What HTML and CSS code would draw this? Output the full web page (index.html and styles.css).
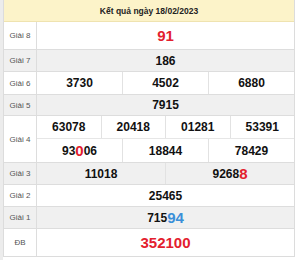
FILE: index.html
```html
<!DOCTYPE html>
<html lang="vi">
<head>
<meta charset="utf-8">
<title>Kết quả ngày 18/02/2023</title>
<link rel="stylesheet" href="styles.css">
</head>
<body>
<div class="wrap">
  <div class="board">
    <div class="head">Kết quả ngày 18/02/2023</div>
    <div class="row r8">
      <div class="label">Giải 8</div>
      <div class="cells"><div class="cell big red">91</div></div>
    </div>
    <div class="row alt r7">
      <div class="label">Giải 7</div>
      <div class="cells"><div class="cell">186</div></div>
    </div>
    <div class="row r6">
      <div class="label">Giải 6</div>
      <div class="cells"><div class="cell">3730</div><div class="cell">4502</div><div class="cell">6880</div></div>
    </div>
    <div class="row alt r5">
      <div class="label">Giải 5</div>
      <div class="cells"><div class="cell">7915</div></div>
    </div>
    <div class="row r4">
      <div class="label">Giải 4</div>
      <div class="stack">
        <div class="cells sub1"><div class="cell">63078</div><div class="cell">20418</div><div class="cell">01281</div><div class="cell">53391</div></div>
        <div class="cells sub2"><div class="cell">93<span class="big red">0</span>06</div><div class="cell">18844</div><div class="cell">78429</div></div>
      </div>
    </div>
    <div class="row alt r3">
      <div class="label">Giải 3</div>
      <div class="cells"><div class="cell">11018</div><div class="cell">9268<span class="big red">8</span></div></div>
    </div>
    <div class="row r2">
      <div class="label">Giải 2</div>
      <div class="cells"><div class="cell">25465</div></div>
    </div>
    <div class="row alt r1">
      <div class="label">Giải 1</div>
      <div class="cells"><div class="cell">715<span class="big blue">94</span></div></div>
    </div>
    <div class="row rdb">
      <div class="label">ĐB</div>
      <div class="cells"><div class="cell big red">352100</div></div>
    </div>
  </div>
</div>
</body>
</html>
```
FILE: styles.css
```css
html, body {
  margin: 0;
  padding: 0;
  background: #ffffff;
}
body {
  font-family: "Liberation Sans", Arial, sans-serif;
  width: 300px;
  height: 260px;
  overflow: hidden;
}
.wrap {
  border-left: 3px solid #ececec;
  width: 292px;
  height: 260px;
}
.board {
  width: 292px;
  box-sizing: border-box;
  border-left: 1px solid #dcdcdc;
  border-right: 1px solid #dcdcdc;
  border-bottom: 1px solid #dcdcdc;
}
.head {
  height: 22px;
  background: #fcf3c9;
  border-bottom: 1px solid #efe3b0;
  box-sizing: border-box;
  display: flex;
  align-items: center;
  justify-content: center;
  font-weight: bold;
  font-size: 8.5px;
  color: #222;
}
.row {
  display: flex;
  box-sizing: border-box;
  border-top: 1px solid #dddddd;
  background: #ffffff;
}
.head + .row { border-top: none; }
.row.alt { background: #f0f0f0; }
.r8 { height: 27px; }
.r7 { height: 22px; }
.r6 { height: 23px; }
.r5 { height: 21px; }
.r4 { height: 47px; }
.r3 { height: 22px; }
.r2 { height: 22px; }
.r1 { height: 22px; }
.rdb { height: 28px; }
.label {
  width: 32px;
  flex: none;
  border-right: 1px solid #dddddd;
  display: flex;
  align-items: center;
  justify-content: center;
  font-size: 8px;
  color: #555555;
}
.cells {
  flex: 1;
  display: flex;
}
.stack {
  flex: 1;
  display: flex;
  flex-direction: column;
}
.sub1 {
  height: 22px;
  flex: none;
  border-bottom: 1px solid #e6e6e6;
}
.sub2 { flex: 1; }
.cell {
  flex: 1;
  display: flex;
  align-items: center;
  justify-content: center;
  font-weight: bold;
  font-size: 12px;
  color: #111111;
}
.cell + .cell { border-left: 1px solid #e2e2e2; }
.cell span { line-height: 1; }
.big { font-size: 15px; }
.red { color: #e3202e; }
.blue { color: #3a8fd8; }
```
